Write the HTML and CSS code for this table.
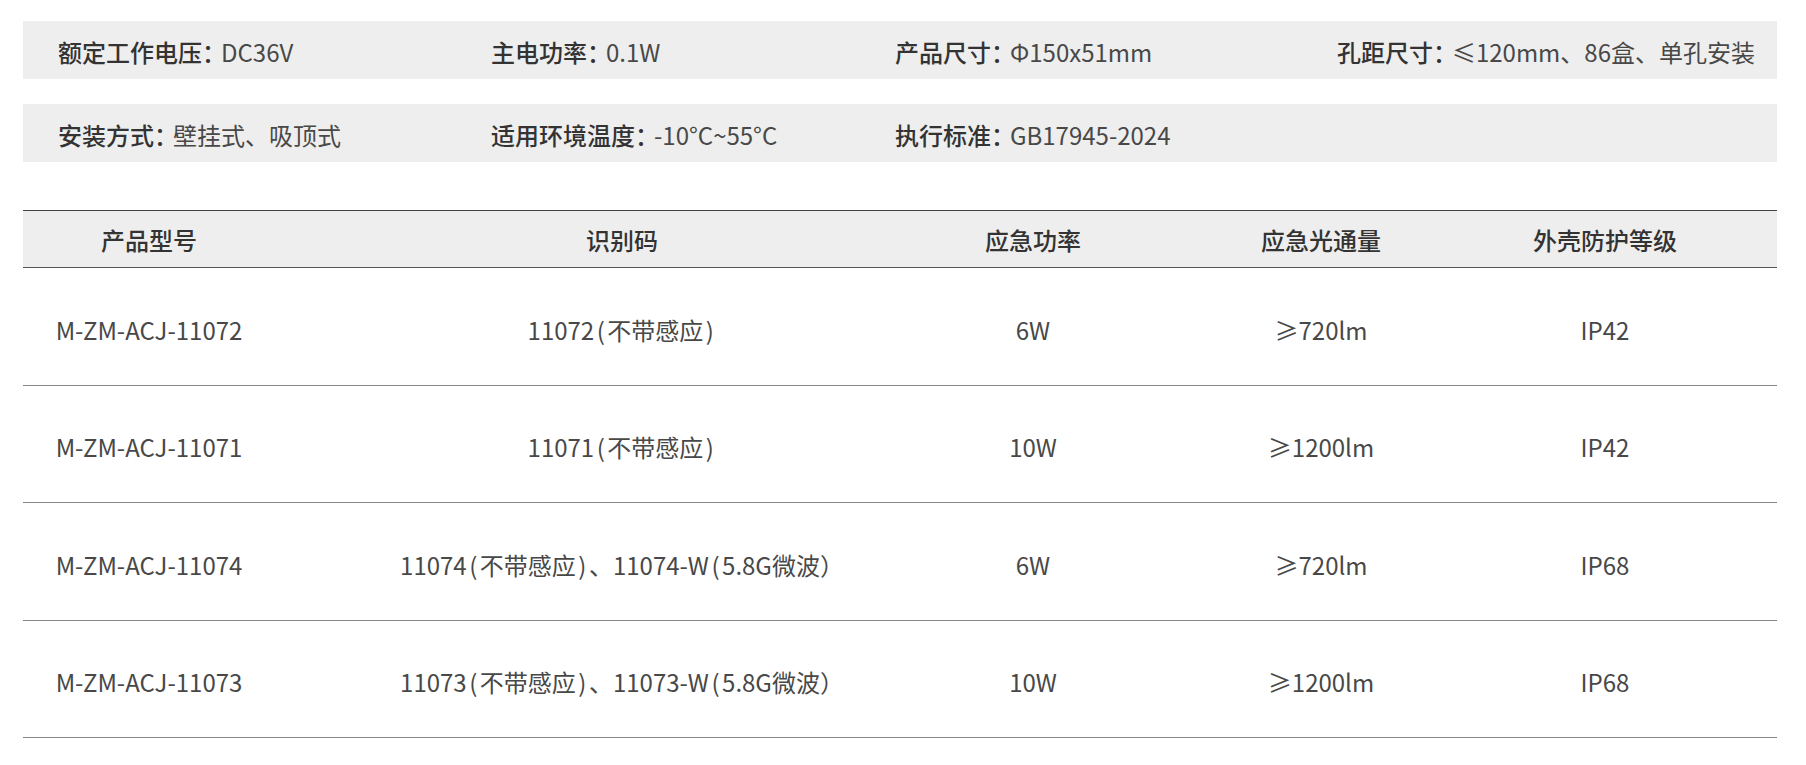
FILE: index.html
```html
<!DOCTYPE html>
<html lang="zh-CN">
<head>
<meta charset="utf-8">
<title>产品参数</title>
<link rel="stylesheet" href="styles.css">
</head>
<body>
<div class="page">
  <div class="spec-bar">
    <div class="spec"><span class="spec-label">额定工作电压：</span><span class="spec-value">DC36V</span></div>
    <div class="spec"><span class="spec-label">主电功率：</span><span class="spec-value">0.1W</span></div>
    <div class="spec"><span class="spec-label">产品尺寸：</span><span class="spec-value">Φ150x51mm</span></div>
    <div class="spec spec-end"><span class="spec-label">孔距尺寸：</span><span class="spec-value">≤120mm、86盒、单孔安装</span></div>
  </div>
  <div class="spec-bar">
    <div class="spec"><span class="spec-label">安装方式：</span><span class="spec-value">壁挂式、吸顶式</span></div>
    <div class="spec"><span class="spec-label">适用环境温度：</span><span class="spec-value">-10°C~55°C</span></div>
    <div class="spec"><span class="spec-label">执行标准：</span><span class="spec-value">GB17945-2024</span></div>
  </div>

  <div class="table">
    <div class="row head">
      <div class="cell">产品型号</div>
      <div class="cell">识别码</div>
      <div class="cell">应急功率</div>
      <div class="cell">应急光通量</div>
      <div class="cell c5">外壳防护等级</div>
    </div>
    <div class="row">
      <div class="cell">M-ZM-ACJ-11072</div>
      <div class="cell">11072<span class="p">(</span>不带感应<span class="p">)</span></div>
      <div class="cell">6W</div>
      <div class="cell">≥720lm</div>
      <div class="cell c5">IP42</div>
    </div>
    <div class="row">
      <div class="cell">M-ZM-ACJ-11071</div>
      <div class="cell">11071<span class="p">(</span>不带感应<span class="p">)</span></div>
      <div class="cell">10W</div>
      <div class="cell">≥1200lm</div>
      <div class="cell c5">IP42</div>
    </div>
    <div class="row">
      <div class="cell">M-ZM-ACJ-11074</div>
      <div class="cell">11074<span class="p">(</span>不带感应<span class="p">)</span>、11074-W<span class="p">(</span>5.8G微波）</div>
      <div class="cell">6W</div>
      <div class="cell">≥720lm</div>
      <div class="cell c5">IP68</div>
    </div>
    <div class="row">
      <div class="cell">M-ZM-ACJ-11073</div>
      <div class="cell">11073<span class="p">(</span>不带感应<span class="p">)</span>、11073-W<span class="p">(</span>5.8G微波）</div>
      <div class="cell">10W</div>
      <div class="cell">≥1200lm</div>
      <div class="cell c5">IP68</div>
    </div>
  </div>
</div>
</body>
</html>
```

FILE: styles.css
```css
* { box-sizing: border-box; }

html, body {
  margin: 0;
  padding: 0;
  background: #ffffff;
}

body {
  font-family: "Noto Sans CJK SC", "Noto Sans", sans-serif;
  color: #444;
}

.page {
  width: 1754px;
  margin-left: 23px;
  padding-top: 21px;
}

.spec-bar {
  display: grid;
  grid-template-columns: 433px 404px 1fr auto;
  align-items: center;
  height: 58px;
  padding: 3px 22px 0 35px;
  background: #eeeeee;
  margin-bottom: 25px;
  font-size: 24px;
  line-height: 1;
  white-space: nowrap;
}

.spec-label {
  font-weight: 500;
  color: #333;
  margin-right: -5px;
}

.spec-value {
  font-weight: 400;
  color: #484848;
}

.spec-end {
  justify-self: end;
}

.table {
  margin-top: 48px;
  border-top: 1px solid #444;
}

.row {
  display: grid;
  grid-template-columns: 252px 694px 128px 448px minmax(0, 1fr);
  align-items: center;
  height: 117.5px;
  padding-top: 6px;
  border-bottom: 1px solid #888;
  font-size: 24px;
  color: #484848;
}

.row.head {
  height: 57px;
  padding-top: 0;
  background: #eeeeee;
  border-bottom-color: #555;
  font-weight: 500;
  color: #333;
}

.cell {
  display: flex;
  justify-content: center;
  white-space: nowrap;
}

.cell.c5 {
  padding-right: 112px;
}

.p {
  padding: 0 2.5px;
}
```
